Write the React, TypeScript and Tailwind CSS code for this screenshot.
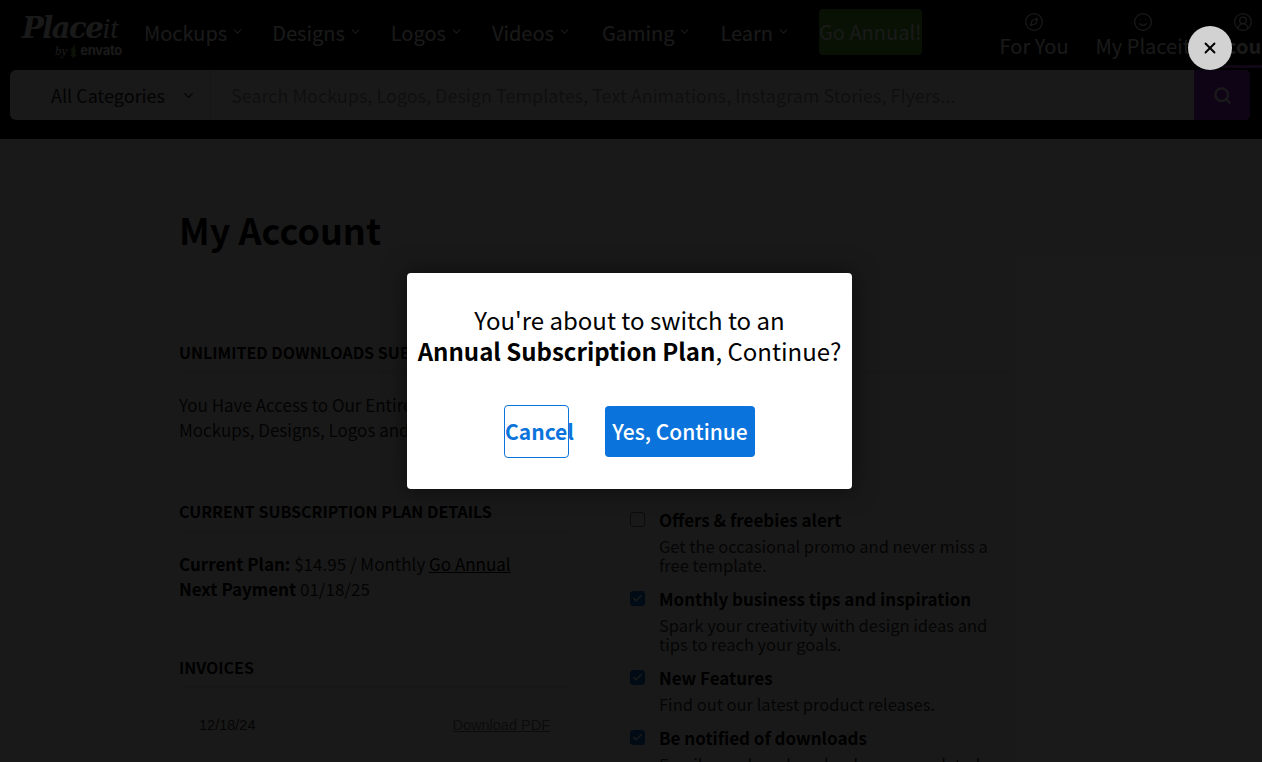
import { ArrowDown, Check, ChevronDown, CircleUserRound, Compass, Search, Smile, X } from 'lucide-react';

const navItems = ['Mockups', 'Designs', 'Logos', 'Videos', 'Gaming', 'Learn'];
const navGaps = ['mr-[28px]', 'mr-[29px]', 'mr-[29px]', 'mr-[31px]', 'mr-[29px]', 'mr-[28px]'];

const prefs = [
  {
    title: 'Offers & freebies alert',
    text: 'Get the occasional promo and never miss a free template.',
    checked: false,
    gap: 'mb-[14px]',
  },
  {
    title: 'Monthly business tips and inspiration',
    text: 'Spark your creativity with design ideas and tips to reach your goals.',
    checked: true,
    gap: 'mb-[14px]',
  },
  {
    title: 'New Features',
    text: 'Find out our latest product releases.',
    checked: true,
    gap: 'mb-[14px]',
  },
  {
    title: 'Be notified of downloads',
    text: 'Email me when downloads are completed.',
    checked: true,
    gap: '',
  },
];

function Logo() {
  return (
    <div className="w-[100px] shrink-0 mr-[22px] text-white select-none">
      <div className="h-[34px] leading-[34px] whitespace-nowrap font-['DejaVu_Serif',serif] italic text-[29px] tracking-[-1.5px]">
        <span className="font-bold">Place</span>
        <span className="font-['Liberation_Serif',serif] font-normal tracking-[0px]">it</span>
      </div>
      <div className="flex items-center justify-end h-[16px] -mt-[2px] font-['Inter',sans-serif] whitespace-nowrap">
        <span className="font-['Liberation_Serif',serif] italic text-[13px] mr-[2px]">by</span>
        <svg viewBox="0 0 10 16" className="w-[9px] h-[14px] mr-[2px] fill-[#82b541]">
          <path d="M7 0 1 7h3L1 10h3l-3 4h3v2h2v-2h3L6 10h3L6 7h3L6 5z" />
        </svg>
        <span className="font-bold text-[13px] tracking-[-0.3px]">envato</span>
      </div>
    </div>
  );
}

function Header() {
  return (
    <header className="bg-black h-[139px] shrink-0 overflow-hidden">
      <div className="flex items-center h-[70px] pl-[22px] whitespace-nowrap">
        <Logo />
        <nav className="flex items-center h-[46px] -mt-[4px] text-white text-[20px] leading-[26px]">
          {navItems.map((item, i) => (
            <a key={item} className={`flex items-center ${navGaps[i]}`}>
              {item}
              <ChevronDown className="w-[13px] h-[13px] ml-[4px] -mt-[3px]" strokeWidth={2} />
            </a>
          ))}
        </nav>
        <button className="w-[142px] h-[46px] -mt-[6px] ml-[1px] rounded-[4px] bg-[#4fae25] text-white text-[20px] leading-[26px]">
          Go Annual!
        </button>
        <ArrowDown className="w-[18px] h-[18px] ml-[32px] mr-[46px] text-white" strokeWidth={2} />
        <div className="flex text-white text-[20px] leading-[24px]">
          <a className="flex flex-col items-center mr-[27px]">
            <Compass className="w-[20px] h-[20px] mb-[2px]" strokeWidth={1.5} />
            For You
          </a>
          <a className="flex flex-col items-center mr-[13px]">
            <Smile className="w-[20px] h-[20px] mb-[2px]" strokeWidth={1.5} />
            My Placeit
          </a>
          <a className="relative flex flex-col items-center font-semibold">
            <CircleUserRound className="w-[20px] h-[20px] mb-[2px]" strokeWidth={1.5} />
            Account
            <span className="absolute left-0 right-0 top-[53px] h-[3px] bg-[#9b3fe0]" />
          </a>
        </div>
      </div>
      <div className="flex h-[50px] mx-[10px] w-[1240px] rounded-[6px] bg-white overflow-hidden">
        <div className="w-[201px] shrink-0 flex items-center border-r border-[#e0e0e0] pl-[41px] text-[18px] text-[#222]">
          All Categories
          <ChevronDown className="w-[15px] h-[15px] ml-[16px]" strokeWidth={2} />
        </div>
        <div className="flex-1 flex items-center pl-[20px] text-[18px] text-[#9a9a9a] whitespace-nowrap">
          Search Mockups, Logos, Design Templates, Text Animations, Instagram Stories, Flyers...
        </div>
        <div className="w-[56px] shrink-0 flex items-center justify-center bg-[#8a2be2] text-white">
          <Search className="w-[19px] h-[19px]" strokeWidth={3} />
        </div>
      </div>
    </header>
  );
}

function SectionTitle({ children, className = '' }: { children: React.ReactNode; className?: string }) {
  return (
    <h2 className={`h-[31px] border-b border-[#e6e6e6] text-[16px] leading-[20px] font-bold uppercase text-black whitespace-nowrap ${className}`}>
      {children}
    </h2>
  );
}

function LeftColumn() {
  return (
    <div>
      <SectionTitle className="mb-[19px]">Unlimited Downloads Subscription</SectionTitle>
      <p className="text-[17px] leading-[25px] text-[#222] mb-[59px]">
        You Have Access to Our Entire Library of Mockups, Designs, Logos and Videos!
      </p>
      <SectionTitle className="mb-[19px]">Current Subscription Plan Details</SectionTitle>
      <p className="text-[17px] leading-[25px] text-[#222] mb-[56px]">
        <b className="font-bold text-black">Current Plan:</b> $14.95 / Monthly{' '}
        <a className="underline text-black">Go Annual</a>
        <br />
        <b className="font-bold text-black">Next Payment</b> 01/18/25
      </p>
      <SectionTitle className="mb-[18px]">Invoices</SectionTitle>
      <div className="flex flex-col gap-[8px] font-['Liberation_Sans',sans-serif] text-[14.5px] leading-[20px] text-[#333]">
        {['12/18/24', '12/17/24'].map((date) => (
          <div key={date} className="flex justify-between items-center h-[37px] px-[19px] rounded-[3px] bg-[#fdfdfd] border border-[#f2f2f2]">
            <span>{date}</span>
            <a className="underline text-[#777]">Download PDF</a>
          </div>
        ))}
      </div>
    </div>
  );
}

function RightColumn() {
  return (
    <div className="w-[385px]">
      <div className="h-[31px] border-b border-[#e6e6e6] mb-[114px]" />
      <div className="h-[1px] mb-[22px]" />
      <div className="flex flex-col">
        {prefs.map((pref) => (
          <div key={pref.title} className={`flex ${pref.gap}`}>
            <span
              className={`mt-[2px] mr-[14px] w-[15px] h-[15px] shrink-0 rounded-[3px] flex items-center justify-center border ${
                pref.checked ? 'bg-[#0a74dc] border-[#0a74dc]' : 'bg-white border-[#777]'
              }`}
            >
              {pref.checked && <Check className="w-[11px] h-[11px] text-white" strokeWidth={3.5} />}
            </span>
            <div>
              <h3 className="text-[17px] leading-[20px] font-bold text-black mb-[7px]">{pref.title}</h3>
              <p className="text-[16.5px] leading-[19px] text-[#333]">{pref.text}</p>
            </div>
          </div>
        ))}
      </div>
    </div>
  );
}

function ConfirmModal() {
  return (
    <div className="absolute inset-0 bg-black/90 flex items-center justify-center pr-[3px] pb-[1px]">
      <button className="absolute top-[26px] right-[30px] w-[44px] h-[44px] rounded-full bg-[#d2d2d2] flex items-center justify-center text-black">
        <X className="w-[18px] h-[18px]" strokeWidth={2.5} />
      </button>
      <div className="w-[445px] h-[216px] rounded-[4px] bg-white pt-[31px] text-center shadow-[0_0_24px_rgba(0,0,0,0.5)]">
        <p className="text-[24px] leading-[31px] text-black">
          You're about to switch to an
          <br />
          <b className="font-bold">Annual Subscription Plan</b>, Continue?
        </p>
        <div className="flex justify-center items-center gap-[36px] mt-[39px] text-[21px] leading-[26px]">
          <button className="w-[65px] h-[53px] -mr-[0px] rounded-[4px] border border-[#0a74dc] bg-white text-[#0a74dc] font-semibold">
            Cancel
          </button>
          <button className="w-[150px] h-[51px] rounded-[4px] bg-[#0a74dc] text-white font-medium">
            Yes, Continue
          </button>
        </div>
      </div>
    </div>
  );
}

export default function App() {
  return (
    <div className="relative h-screen overflow-hidden flex flex-col bg-white font-['Noto_Sans_CJK_JP','Noto_Sans',sans-serif]">
      <Header />
      <main className="pl-[179px] pt-[65px]">
        <h1 className="text-[36px] leading-[50px] font-bold text-black mb-[88px]">My Account</h1>
        <div className="flex gap-[60px]">
          <div className="w-[391px]">
            <LeftColumn />
          </div>
          <RightColumn />
        </div>
      </main>
      <ConfirmModal />
    </div>
  );
}
